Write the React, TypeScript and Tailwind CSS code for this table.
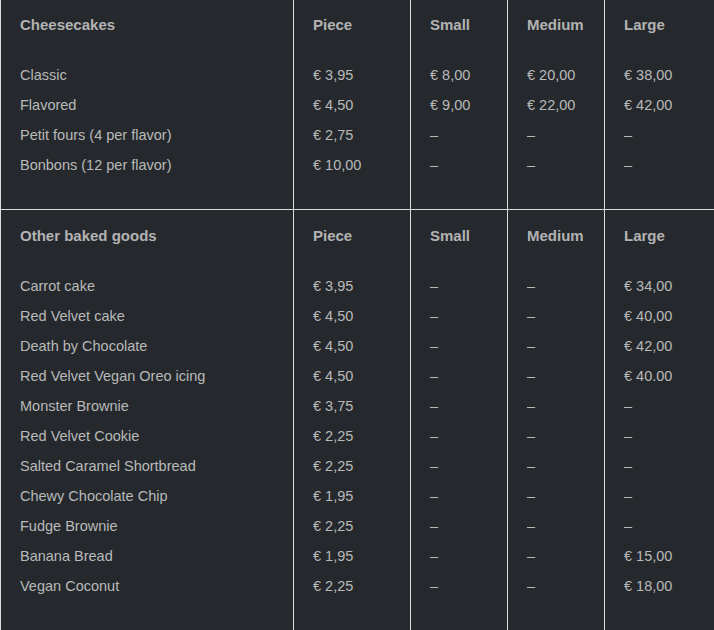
import React from "react";

type Row = [string, string, string, string, string];

const sections: { title: string; rows: Row[]; top: string }[] = [
  {
    title: "Cheesecakes",
    top: "pt-[10px]",
    rows: [
      ["Classic", "€ 3,95", "€ 8,00", "€ 20,00", "€ 38,00"],
      ["Flavored", "€ 4,50", "€ 9,00", "€ 22,00", "€ 42,00"],
      ["Petit fours (4 per flavor)", "€ 2,75", "–", "–", "–"],
      ["Bonbons (12 per flavor)", "€ 10,00", "–", "–", "–"],
    ],
  },
  {
    title: "Other baked goods",
    top: "pt-[11px]",
    rows: [
      ["Carrot cake", "€ 3,95", "–", "–", "€ 34,00"],
      ["Red Velvet cake", "€ 4,50", "–", "–", "€ 40,00"],
      ["Death by Chocolate", "€ 4,50", "–", "–", "€ 42,00"],
      ["Red Velvet Vegan Oreo icing", "€ 4,50", "–", "–", "€ 40.00"],
      ["Monster Brownie", "€ 3,75", "–", "–", "–"],
      ["Red Velvet Cookie", "€ 2,25", "–", "–", "–"],
      ["Salted Caramel Shortbread", "€ 2,25", "–", "–", "–"],
      ["Chewy Chocolate Chip", "€ 1,95", "–", "–", "–"],
      ["Fudge Brownie", "€ 2,25", "–", "–", "–"],
      ["Banana Bread", "€ 1,95", "–", "–", "€ 15,00"],
      ["Vegan Coconut", "€ 2,25", "–", "–", "€ 18,00"],
    ],
  },
];

const headers = ["Piece", "Small", "Medium", "Large"];
const widths = ["w-[293px]", "w-[117px]", "w-[97px]", "w-[97px]", "flex-1"];

export default function App() {
  return (
    <div
      className="min-h-screen w-[714px] bg-[#25292d] text-[14.5px] text-[#b9b9b9] overflow-hidden"
      style={{ fontFamily: '"Liberation Sans", Arial, sans-serif' }}
    >
      {sections.map((s, si) => (
        <div
          key={s.title}
          className={`flex ${si === 0 ? "border-b border-[#dcdcdc]" : ""}`}
        >
          {[0, 1, 2, 3, 4].map((ci) => (
            <div
              key={ci}
              className={`${widths[ci]} border-l border-[#dcdcdc] pl-[19px] ${s.top} ${
                si === 0 ? "pb-[29px]" : "pb-[40px]"
              }`}
            >
              <div className="h-[30px] leading-[30px] text-[15px] font-bold text-[#b3b3b3] whitespace-nowrap">
                {ci === 0 ? s.title : headers[ci - 1]}
              </div>
              <div className="h-[20px]" />
              {s.rows.map((r, ri) => (
                <div key={ri} className="h-[30px] leading-[30px] whitespace-nowrap">
                  {r[ci]}
                </div>
              ))}
            </div>
          ))}
        </div>
      ))}
    </div>
  );
}
